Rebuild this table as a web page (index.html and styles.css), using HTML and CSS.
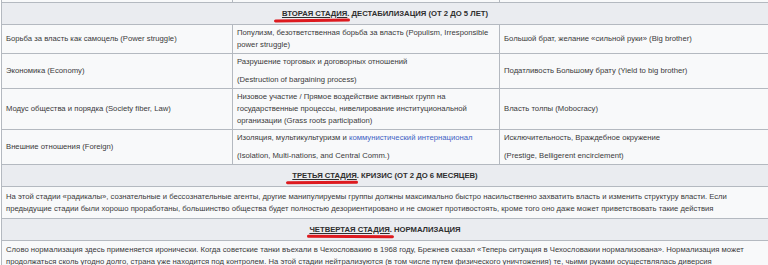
FILE: index.html
```html
<!DOCTYPE html>
<html lang="ru">
<head>
<meta charset="utf-8">
<title>Стадии</title>
<link rel="stylesheet" href="styles.css">
</head>
<body>
<table class="stages">
  <colgroup>
    <col class="c1">
    <col class="c2">
    <col class="c3">
  </colgroup>
  <tr class="cut"><td></td><td></td><td></td></tr>
  <tr class="head">
    <th colspan="3"><a class="mark m1" href="#">Вторая стадия</a>. Дестабилизация (от 2 до 5 лет)</th>
  </tr>
  <tr>
    <td>Борьба за власть как самоцель (Power struggle)</td>
    <td>Популизм, безответственная борьба за власть (Populism, Irresponsible power struggle)</td>
    <td>Большой брат, желание «сильной руки» (Big brother)</td>
  </tr>
  <tr>
    <td>Экономика (Economy)</td>
    <td><p>Разрушение торговых и договорных отношений</p><p>(Destruction of bargaining process)</p></td>
    <td>Податливость Большому брату (Yield to big brother)</td>
  </tr>
  <tr>
    <td>Модус общества и порядка (Society fiber, Law)</td>
    <td>Низовое участие / Прямое воздействие активных групп на государственные процессы, нивелирование институциональной организации (Grass roots participation)</td>
    <td>Власть толпы (Mobocracy)</td>
  </tr>
  <tr>
    <td>Внешние отношения (Foreign)</td>
    <td><p>Изоляция, мультикультуризм и <a class="link" href="#">коммунистический интернационал</a></p><p>(Isolation, Multi-nations, and Central Comm.)</p></td>
    <td><p>Исключительность, Враждебное окружение</p><p>(Prestige, Belligerent encirclement)</p></td>
  </tr>
  <tr class="head">
    <th colspan="3"><a class="mark m2" href="#">Третья стадия</a>. Кризис (от 2 до 6 месяцев)</th>
  </tr>
  <tr class="para">
    <td colspan="3">На этой стадии «радикалы», сознательные и бессознательные агенты, другие манипулируемы группы должны максимально быстро насильственно захватить власть и изменить структуру власти. Если предыдущие стадии были хорошо проработаны, большинство общества будет полностью дезориентировано и не сможет противостоять, кроме того оно даже может приветствовать такие действия</td>
  </tr>
  <tr class="head">
    <th colspan="3"><a class="mark m3" href="#">Четвертая стадия</a>. Нормализация</th>
  </tr>
  <tr class="para last">
    <td colspan="3">Слово нормализация здесь применяется иронически. Когда советские танки въехали в Чехословакию в 1968 году, Брежнев сказал «Теперь ситуация в Чехословакии нормализована». Нормализация может продолжаться сколь угодно долго, страна уже находится под контролем. На этой стадии нейтрализуются (в том числе путем физического уничтожения) те, чьими руками осуществлялась диверсия</td>
  </tr>
</table>
</body>
</html>
```

FILE: styles.css
```css
html, body {
  margin: 0;
  padding: 0;
  background: #ffffff;
}

body {
  padding-left: 1px;
  font-family: "Liberation Sans", Arial, sans-serif;
  font-size: 7.7px;
  line-height: 12px;
  color: #3a3a3a;
}

.stages {
  border-collapse: collapse;
  width: 767px;
  margin-top: -19px;
  background: #f8f9fa;
  table-layout: fixed;
}

.c1 { width: 231px; }
.c2 { width: 267px; }
.c3 { width: 269px; }

.stages td,
.stages th {
  border: 1px solid #b4b9c0;
  padding: 2px 4px;
  vertical-align: middle;
  text-align: left;
  font-weight: normal;
}

.stages p {
  margin: 0;
}

.stages p + p {
  margin-top: 6px;
}

.cut td {
  height: 20px;
  padding: 0;
}

.head th {
  background: #eaecf0;
  text-align: center;
  font-weight: bold;
  text-transform: uppercase;
  padding: 4.5px 4px;
  color: #2e2e2e;
}

.para td {
  padding: 3.5px 4px;
}

.para.last td {
  padding-top: 3px;
}

.mark {
  position: relative;
  color: #2e2e2e;
  text-decoration: underline;
}

.mark::after {
  content: "";
  position: absolute;
  height: 2.7px;
  background: #dd1a1f;
  border-radius: 2px;
}

.m1::after {
  left: -8px;
  right: -3px;
  bottom: -4px;
  transform: rotate(-0.6deg);
}

.m2::after {
  left: -6px;
  right: -2px;
  bottom: -4px;
  transform: rotate(-0.4deg);
}

.m3::after {
  left: -2px;
  right: -5px;
  bottom: -4px;
  transform: rotate(0.4deg);
}

.link {
  color: #3f63c4;
  text-decoration: none;
}
```
